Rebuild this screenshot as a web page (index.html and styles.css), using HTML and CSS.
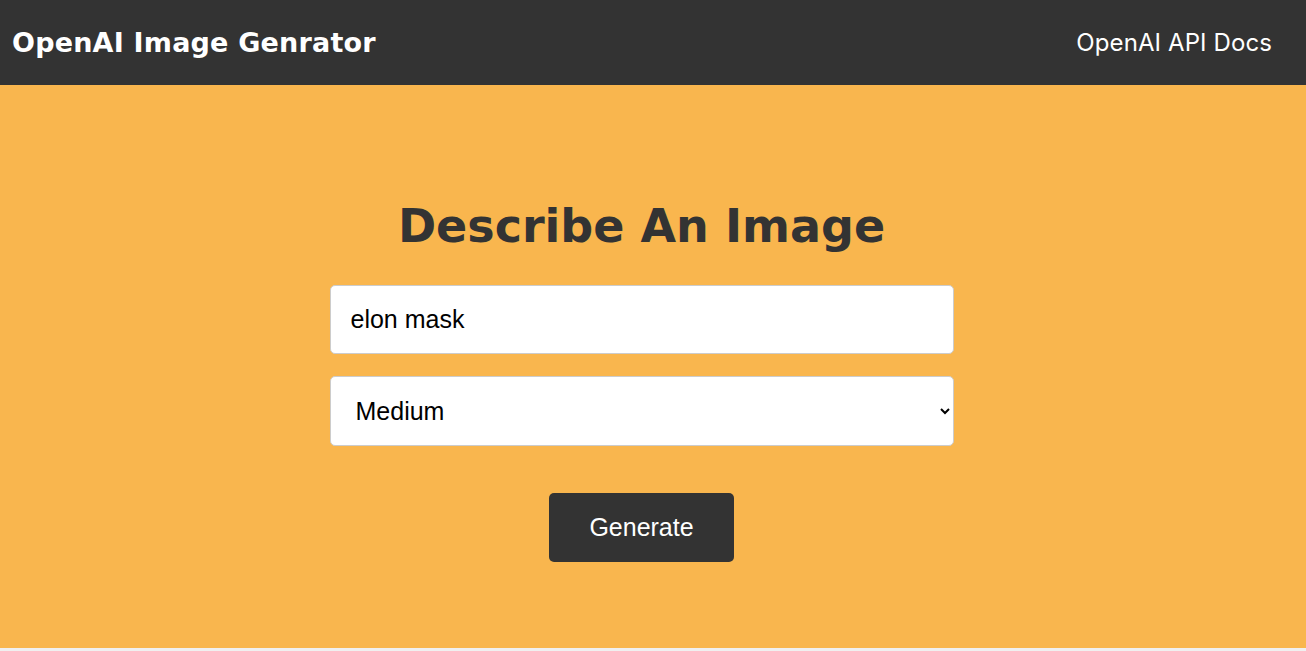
FILE: index.html
```html
<!DOCTYPE html>
<html lang="en">
<head>
<meta charset="UTF-8">
<title>OpenAI Image Genrator</title>
<link rel="stylesheet" href="styles.css">
</head>
<body>
  <header class="navbar">
    <div class="logo">OpenAI Image Genrator</div>
    <nav class="nav-links"><a href="#" class="nav-link">OpenAI API Docs</a></nav>
  </header>
  <main>
    <section class="showcase">
      <form class="image-form">
        <h1 class="title">Describe An Image</h1>
        <div class="form-control">
          <input type="text" class="text-input" value="elon mask">
        </div>
        <div class="form-control">
          <select class="size-select">
            <option>Small</option>
            <option selected>Medium</option>
            <option>Large</option>
          </select>
        </div>
        <button type="button" class="btn">Generate</button>
      </form>
    </section>
    <section class="results">
      <div class="image-area"></div>
    </section>
  </main>
</body>
</html>
```

FILE: styles.css
```css
* {
  box-sizing: border-box;
  margin: 0;
  padding: 0;
}

body {
  font-family: "Inter", "Open Sans", sans-serif;
  background: #f0f0f0;
  color: #333;
}

.navbar {
  height: 85px;
  background: #333;
  color: #fff;
  display: flex;
  align-items: center;
  justify-content: space-between;
  padding: 0 34px 0 12px;
}

.logo {
  font-family: "DejaVu Sans", sans-serif;
  font-size: 27px;
  font-weight: 700;
  letter-spacing: 0.2px;
}

.nav-link {
  color: #fff;
  text-decoration: none;
  font-size: 24px;
  font-weight: 400;
  letter-spacing: 0.1px;
}

.showcase {
  background: #f9b64e;
  height: 563px;
  display: flex;
  justify-content: center;
  padding-top: 114px;
  padding-right: 23px;
}

.image-form {
  width: 624px;
  display: flex;
  flex-direction: column;
  align-items: center;
}

.title {
  font-family: "DejaVu Sans", sans-serif;
  font-size: 46px;
  font-weight: 700;
  line-height: 1.2;
  color: #333;
  margin-bottom: 31px;
}

.form-control {
  width: 100%;
  margin-bottom: 22px;
}

.text-input,
.size-select {
  width: 100%;
  height: 69px;
  border: 1px solid #ccc;
  border-radius: 5px;
  background: #fff;
  font-family: "Liberation Sans", Arial, sans-serif;
  font-size: 25px;
  color: #000;
  padding: 0 20px;
  outline: none;
}

.size-select {
  height: 70px;
  padding: 0 12px 0 21px;
}

.btn {
  margin-top: 25px;
  width: 185px;
  height: 69px;
  background: #333;
  color: #fff;
  border: none;
  border-radius: 5px;
  font-family: "Liberation Sans", Arial, sans-serif;
  font-size: 25px;
  cursor: pointer;
}

.results {
  min-height: 400px;
}
```
